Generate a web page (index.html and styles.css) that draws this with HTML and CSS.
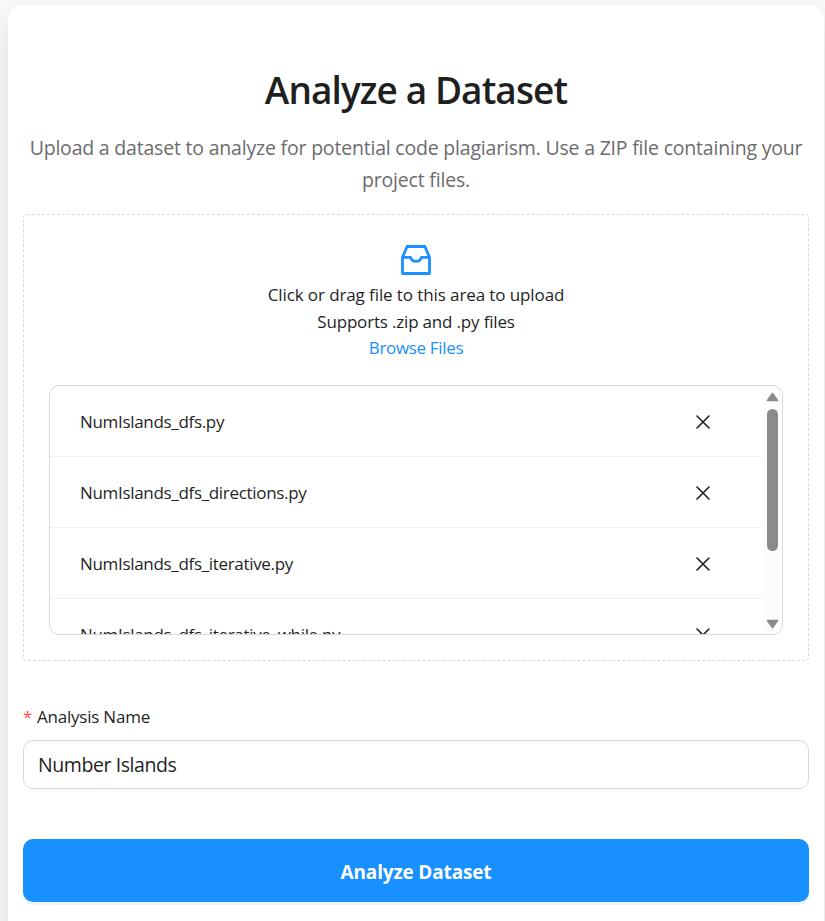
FILE: index.html
```html
<!DOCTYPE html>
<html lang="en">
<head>
<meta charset="utf-8">
<title>Analyze a Dataset</title>
<link rel="stylesheet" href="styles.css">
</head>
<body>
<main class="card">
  <h1 class="title">Analyze a Dataset</h1>
  <p class="subtitle">Upload a dataset to analyze for potential code plagiarism. Use a ZIP file containing your<br>project files.</p>

  <section class="dropzone">
    <svg class="inbox" viewBox="0 0 30 30" fill="none" stroke="currentColor" stroke-width="2.8" stroke-linejoin="round">
      <path d="M1.5 12.2 6.1 1.5H23.9L28.5 12.2V28.5H1.5Z"/>
      <path d="M1.5 12.4H9.6C10.2 14.8 12.2 16.3 15 16.3S19.8 14.8 20.4 12.4H28.5"/>
    </svg>
    <p class="hint">Click or drag file to this area to upload</p>
    <p class="hint formats">Supports .zip and .py files</p>
    <a class="browse">Browse Files</a>

    <div class="files">
      <ul class="list">
        <li class="file"><span>NumIslands_dfs.py</span><svg class="remove" viewBox="0 0 14 14"><path d="M1 1 13 13M13 1 1 13"/></svg></li>
        <li class="file"><span>NumIslands_dfs_directions.py</span><svg class="remove" viewBox="0 0 14 14"><path d="M1 1 13 13M13 1 1 13"/></svg></li>
        <li class="file"><span>NumIslands_dfs_iterative.py</span><svg class="remove" viewBox="0 0 14 14"><path d="M1 1 13 13M13 1 1 13"/></svg></li>
        <li class="file"><span>NumIslands_dfs_iterative_while.py</span><svg class="remove" viewBox="0 0 14 14"><path d="M1 1 13 13M13 1 1 13"/></svg></li>
      </ul>
      <div class="scrollbar">
        <svg class="arrow" viewBox="0 0 13 10"><path d="M6.5 1.5 11.5 8.5H1.5Z"/></svg>
        <div class="thumb"></div>
        <svg class="arrow down" viewBox="0 0 13 10"><path d="M6.5 8.5 11.5 1.5H1.5Z"/></svg>
      </div>
    </div>
  </section>

  <label class="label" for="name"><span class="required">*</span>Analysis Name</label>
  <input class="input" id="name" type="text" value="Number Islands">
  <button class="submit" type="button">Analyze Dataset</button>
</main>
</body>
</html>
```
FILE: styles.css
```css
* { box-sizing: border-box; }

body {
  margin: 0;
  height: 921px;
  overflow: hidden;
  background: #fafafa;
  color: #1f1f1f;
  font: 17px/27px "Open Sans", "Noto Sans", sans-serif;
}

.card {
  width: 816px;
  height: 960px;
  margin: 5px 0 0 8px;
  padding: 60px 15px 0;
  border-radius: 15px;
  background: #fff;
  box-shadow: 0 10px 30px rgba(0, 0, 0, .12);
}

.title {
  margin: 0;
  font-size: 37px;
  font-weight: 600;
  line-height: 50px;
  letter-spacing: -.92px;
  text-align: center;
}

.subtitle {
  margin: 17px 0 18px;
  color: #6c6c6c;
  font-size: 19.5px;
  line-height: 32px;
  letter-spacing: -.2px;
  text-align: center;
  white-space: nowrap;
}

.dropzone {
  display: flex;
  flex-direction: column;
  align-items: center;
  height: 447px;
  padding: 30px 25px 25px;
  border: 1px dashed #d9d9d9;
  border-radius: 4px;
}

.inbox {
  width: 30px;
  height: 30px;
  margin-bottom: 6px;
  color: #1890ff;
}

.hint { margin: 0; letter-spacing: -.1px; }
.formats { letter-spacing: -.18px; }

.browse {
  margin-bottom: 24px;
  color: #1890ff;
  line-height: 26px;
  letter-spacing: -.34px;
}

.files {
  display: flex;
  width: 100%;
  height: 250px;
  border: 1px solid #d9d9d9;
  border-radius: 10px;
  overflow: hidden;
}

.list {
  flex: 1;
  margin: 0;
  padding: 0;
  list-style: none;
}

.file {
  display: flex;
  align-items: center;
  justify-content: space-between;
  height: 71px;
  padding: 0 53.5px 0 30px;
  border-bottom: 1px solid #f0f0f0;
  letter-spacing: -.32px;
}

.remove {
  width: 14px;
  height: 14px;
  margin-top: 1px;
  fill: none;
  stroke: #1f1f1f;
  stroke-width: 1.6;
  stroke-linecap: round;
}

.scrollbar {
  display: flex;
  flex-direction: column;
  align-items: center;
  width: 19px;
  padding: 6px 0 5px;
  background: #fcfcfc;
}

.arrow {
  width: 13px;
  height: 10px;
  fill: #8b8b8b;
  stroke: #8b8b8b;
  stroke-width: 1.6;
  stroke-linejoin: round;
}

.down { margin-top: auto; }

.thumb {
  width: 11px;
  height: 142px;
  margin-top: 7px;
  border-radius: 6px;
  background: #8b8b8b;
}

.label {
  display: flex;
  margin: 42px 0 10px;
  letter-spacing: -.22px;
}

.required {
  width: 14px;
  color: #ff4d4f;
}

.input {
  display: block;
  width: 100%;
  height: 49px;
  padding: 0 14px;
  border: 1px solid #d9d9d9;
  border-radius: 10px;
  outline: none;
  background: #fff;
  color: #1f1f1f;
  font: 19.5px "Open Sans", "Noto Sans", sans-serif;
  letter-spacing: -.42px;
}

.submit {
  display: block;
  width: 100%;
  height: 63px;
  margin-top: 50px;
  padding: 3px 0 0;
  border: 0;
  border-radius: 10px;
  background: #1890ff;
  box-shadow: 0 3px 0 rgba(5, 145, 255, .08);
  color: #fff;
  font: 700 19px "Open Sans", "Noto Sans", sans-serif;
  letter-spacing: -.16px;
}
```
